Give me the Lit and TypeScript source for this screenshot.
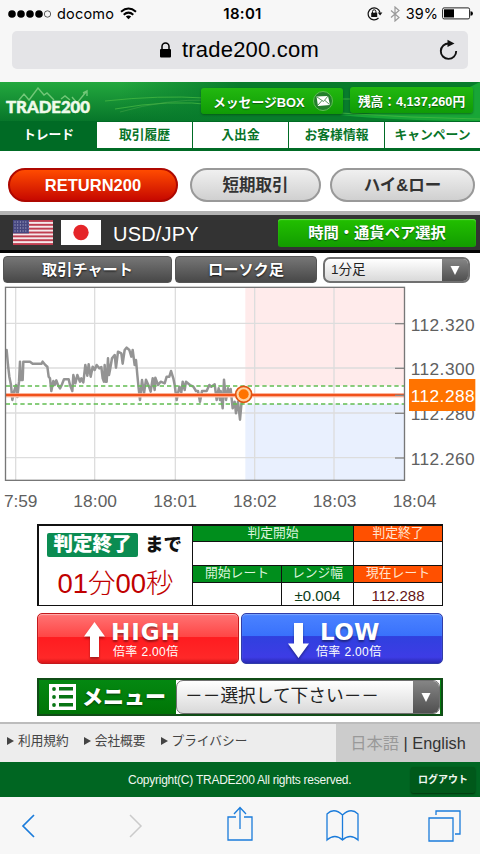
import { LitElement, html, svg, css } from "lit";
import { customElement, property, state } from "lit/decorators.js";
import { classMap } from "lit/directives/class-map.js";

// Chart coordinates are in thirds of a css pixel
const RATE_POINTS =
  "20,195 24,240 28,275 33,300 37,345 42,320 48,300 52,336 57,290 60,230 63,285 68,285 70,230 90,230 98,236 125,236 128,230 136,240 142,245 146,275 150,280 154,318 160,288 164,300 169,286 174,300 180,310 186,298 192,283 206,283 210,300 217,318 220,270 226,295 232,270 240,290 244,280 250,292 256,240 262,272 266,238 272,275 278,245 284,255 290,240 298,250 304,246 308,280 312,290 314,240 317,290 320,290 324,220 327,270 330,255 336,220 344,210 348,248 354,200 364,205 368,236 374,195 380,188 388,195 394,215 398,195 404,240 408,225 412,270 416,310 420,345 426,285 432,325 438,284 446,302 452,320 458,280 464,315 466,278 474,300 482,290 494,295 500,275 508,275 513,258 520,280 524,300 530,345 538,305 544,322 548,290 554,315 558,290 570,300 580,305 588,318 594,318 600,350 606,318 620,318 628,300 634,305 644,298 650,345 656,310 660,345 662,318 668,370 672,284 678,345 684,310 688,325 692,312 698,370 704,350 708,385 714,350 720,404 724,360 730,330";

@customElement("browser-bar")
export class BrowserBar extends LitElement {
  static styles = css`
    :host {
      display: block;
      height: 82px;
      background: #f7f7f7;
      color: #000;
      font-family: Inter, "Liberation Sans", sans-serif;
    }

    .status {
      display: grid;
      grid-template-columns: 1fr auto 1fr;
      align-items: center;
      height: 27px;
      padding: 0 7px 0 8px;
      font-size: 14.5px;
      line-height: 27px;
    }

    .left,
    .right {
      display: flex;
      align-items: center;
    }

    .left {
      gap: 6px;
    }

    .left span {
      letter-spacing: 0.2px;
    }

    .right {
      justify-content: flex-end;
      gap: 4px;
    }

    .time {
      padding-left: 4px;
      font-weight: 600;
      font-size: 15px;
      letter-spacing: 0.3px;
    }

    .address {
      display: flex;
      align-items: center;
      height: 38px;
      margin: 4px 12px 0;
      padding: 0 10px 0 147px;
      border-radius: 5px;
      background: #e4e4e7;
    }

    .host {
      flex: 1;
      margin-left: 10px;
      font-family: "Liberation Sans", sans-serif;
      font-size: 22px;
      letter-spacing: 0.2px;
    }
  `;

  render() {
    return html`
      <div class="status">
        <div class="left">
          <svg width="43" height="10" viewBox="0 0 43 10">
            ${[4, 13, 22, 31].map((x) => svg`<circle cx=${x} cy="5" r="3.8" />`)}
            <circle cx="39.5" cy="5" r="3.2" fill="none" stroke="#333" stroke-width=".8" />
          </svg>
          <span>docomo</span>
          <svg width="17" height="13" viewBox="0 0 17 13" fill="none" stroke="#000" stroke-width="2">
            <path d="M1 4.7Q8.500-1.700 16 4.700M3.700 7.700Q8.500 3.600 13.300 7.700" />
            <path d="M5.800 9.500Q8.500 7.300 11.200 9.500L8.500 12.300z" fill="#000" stroke="none" />
          </svg>
        </div>
        <span class="time">18:01</span>
        <div class="right">
          <svg width="17" height="15" viewBox="0 0 17 15" fill="none" stroke="#111">
            <path d="M11.500 12A6 6 0 1 1 13 6.500" stroke-width="1.200" />
            <path d="M10.800 6.500h4.600l-2.300 3z" fill="#111" stroke="none" />
            <rect x="4.200" y="6.700" width="6" height="4.300" fill="#111" stroke="none" />
            <path d="M5.500 7V5.500a1.700 1.700 0 0 1 3.400 0V7" />
          </svg>
          <svg width="14" height="16" viewBox="0 0 14 16" fill="none" stroke="#999" stroke-width="1.200">
            <path d="M3 4.500l8 7-4 3.500V1l4 3.500-8 7" />
          </svg>
          <span>39%</span>
          <svg width="31" height="13" viewBox="0 0 31 13">
            <rect x=".6" y=".9" width="27" height="11" rx="1.500" fill="#fff" stroke="#222" />
            <rect x="2" y="2.300" width="10" height="8.200" />
            <path d="M28.500 4.300q2.500 0 2.500 2.200t-2.500 2.200z" />
          </svg>
        </div>
      </div>
      <div class="address">
        <svg width="13" height="16" viewBox="0 0 13 16">
          <rect x="1" y="7" width="11" height="8.500" rx="1" />
          <path d="M3 8V4.600a3.500 3.500 0 0 1 7 0V8" fill="none" stroke="#000" stroke-width="1.500" />
        </svg>
        <span class="host">trade200.com</span>
        <svg width="19" height="22" viewBox="0 0 19 22">
          <path d="M10 4.500A7.700 7.700 0 1 0 17.200 12" fill="none" stroke="#111" stroke-width="1.900" />
          <path d="M8.500 .8l7 3.700-7 3.500z" fill="#111" />
        </svg>
      </div>
    `;
  }
}

@customElement("rate-chart")
export class RateChart extends LitElement {
  static styles = css`
    :host {
      display: block;
      height: 230px;
    }

    svg {
      display: block;
    }

    .grid {
      stroke: #ddd;
      stroke-width: 4;
    }

    .tick {
      stroke: #888;
      stroke-width: 4;
    }

    .limit {
      stroke: #62bd52;
      stroke-width: 4.5;
      stroke-dasharray: 13 9;
    }

    .rate {
      fill: none;
      stroke: #949494;
      stroke-width: 7.5;
      stroke-linejoin: round;
      stroke-linecap: round;
    }

    text {
      font-family: "Liberation Sans", sans-serif;
      font-size: 52px;
      fill: #606060;
    }

    .current {
      fill: #fff;
    }
  `;

  @property({ type: String }) current = "112.288";

  render() {
    const rates: [string, number][] = [
      ["112.320", 115],
      ["112.300", 249],
      ["112.280", 384],
      ["112.260", 518],
    ];
    const times = ["18:00", "18:01", "18:02", "18:03", "18:04"];
    return html`
      <svg width="480" height="230" viewBox="0 0 1440 690">
        <rect x="736" y="8" width="477" height="294" fill="#ffebeb" />
        <rect x="736" y="357" width="477" height="228" fill="#e9f0fe" />
        ${[47, 284, 526, 764, 1002].map(
          (x) => svg`<line class="grid" x1=${x} x2=${x} y1="8" y2="585" />`
        )}
        ${rates.map(
          ([label, y]) => svg`
            <line class="grid" x1="16" x2="1213" y1=${y} y2=${y} />
            <line class="tick" x1="1185" x2="1213" y1=${y + 1} y2=${y + 1} />
            <text x="1232" y=${y + 22} textLength="192">${label}</text>
          `
        )}
        <polyline class="rate" points=${RATE_POINTS} />
        <line class="limit" x1="17" x2="1213" y1="303" y2="303" />
        <line class="limit" x1="17" x2="1213" y1="357" y2="357" />
        <line x1="16" x2="1213" y1="331" y2="331" stroke="#ffc9b5" stroke-width="13" />
        <line x1="16" x2="1213" y1="330" y2="330" stroke="#f1511b" stroke-width="7" />
        <line class="tick" x1="1185" x2="1213" y1="331" y2="331" />
        <rect x="16.500" y="7" width="1197" height="579" fill="none" stroke="#777" stroke-width="4" />
        <circle cx="731" cy="328" r="24" fill="#ffd0a0" stroke="#df5510" stroke-width="5" />
        <circle cx="731" cy="328" r="15" fill="#ff7300" />
        <rect x="1227" y="282" width="199" height="96" fill="#ff7300" />
        <text class="current" x="1232" y="350" textLength="192">${this.current}</text>
        <text x="12" y="666" textLength="100">7:59</text>
        ${times.map(
          (t, i) => svg`<text x=${220 + i * 239.5} y="666" textLength="131">${t}</text>`
        )}
      </svg>
    `;
  }
}

@customElement("order-button")
export class OrderButton extends LitElement {
  static styles = css`
    :host {
      display: block;
      flex: 1;
    }

    .button {
      display: flex;
      box-sizing: border-box;
      height: 51px;
      padding: 8px 0 0 46px;
      gap: 8px;
      border: 1px solid #c3191c;
      border-radius: 5px;
      background: linear-gradient(#ff7474, #ff4646 46%, #ff1c20 48%, #ff2828 90%, #d9161a);
      box-shadow: inset 0 1px 1px #ffb0b0;
      color: #fff;
    }

    .low {
      gap: 7px;
      border-color: #303da8;
      background: linear-gradient(#4b83ff, #3971fc 44%, #3040df 46%, #3d3ce5 88%, #2929b4);
      box-shadow: inset 0 1px 1px #79a5ff;
    }

    .arrow {
      filter: drop-shadow(0 2px 1px rgba(0, 0, 0, 0.35));
    }

    .low .arrow {
      transform: rotate(180deg);
      filter: drop-shadow(0 -2px 1px rgba(0, 0, 0, 0.35));
    }

    .labels {
      display: flex;
      flex-direction: column;
    }

    .side {
      height: 23px;
      font: bold 23px/20px "DejaVu Sans", sans-serif;
      letter-spacing: 1px;
      text-shadow: 0 2px 2px rgba(0, 0, 0, 0.4);
    }

    .high .side {
      margin-left: -2px;
    }

    .low .side {
      padding-left: 4px;
      letter-spacing: 0.3px;
    }

    .payout {
      font: 12px/14px "Liberation Sans", "Noto Sans CJK JP", sans-serif;
      letter-spacing: 0.35px;
    }
  `;

  @property({ type: String }) side = "HIGH";

  render() {
    const low = this.side === "LOW";
    return html`
      <div class="button ${classMap({ low, high: !low })}">
        <svg class="arrow" width="21" height="36" viewBox="0 0 21 36">
          <path d="M10.500 0L21 14.500h-6V35H6V14.500H0z" fill="#fff" />
        </svg>
        <div class="labels">
          <span class="side">${this.side}</span>
          <span class="payout">倍率 2.00倍</span>
        </div>
      </div>
    `;
  }
}

@customElement("app-root")
export class AppRoot extends LitElement {
  static styles = css`
    :host {
      display: flex;
      flex-direction: column;
      width: 480px;
      height: 854px;
      overflow: hidden;
      background: #fff;
      color: #333;
      font-family: "Liberation Sans", "Noto Sans CJK JP", sans-serif;
      white-space: nowrap;
    }

    .header {
      display: grid;
      height: 39px;
      background: linear-gradient(#14833a, #0c8c2c 55%, #0a8428);
    }

    .swoosh,
    .header-row {
      grid-area: 1 / 1;
    }

    .header-row {
      display: flex;
      align-items: flex-start;
      padding: 5px 7px 0 5px;
    }

    .logo text {
      font: 900 16.5px Lato, sans-serif;
      fill: #effaea;
      stroke: #effaea;
      stroke-width: 0.5px;
    }

    .message,
    .balance {
      display: flex;
      align-items: center;
      box-sizing: border-box;
      height: 26px;
      margin-top: 1px;
      border-radius: 3px;
      background: linear-gradient(#22b80f, #109b06);
      box-shadow: 0 1px 2px rgba(0, 60, 0, 0.5);
      color: #fff;
      font-size: 12.800px;
      font-weight: bold;
      text-shadow: 0 1px 1px #075c0b;
    }

    .message {
      width: 142px;
      margin-left: 107px;
      padding-left: 12px;
      gap: 9px;
    }

    .balance {
      justify-content: center;
      width: 123px;
      margin-top: 0;
      margin-left: 7px;
      font-size: 12.700px;
    }

    .tabs {
      display: grid;
      grid-template-columns: repeat(5, 1fr);
      gap: 1px;
      height: 26px;
      padding: 1px 0 3px 1px;
      background: #006b25;
    }

    .tab {
      background: #fff;
      color: #087428;
      font-size: 12.800px;
      font-weight: bold;
      line-height: 26px;
      text-align: center;
    }

    .tab.active {
      background: #006b25;
      color: #fff;
    }

    .modes {
      display: flex;
      height: 33px;
      padding: 17px 5px 10px 8px;
    }

    .mode {
      box-sizing: border-box;
      height: 34px;
      border: 2px solid #999;
      border-radius: 17px;
      background: linear-gradient(#f0f0f0, #d0d0d0);
      font-size: 16.500px;
      font-weight: bold;
      line-height: 30px;
      text-align: center;
    }

    .mode.return {
      width: 170px;
      margin-right: 12px;
      border-color: #ae0800;
      background: linear-gradient(#ff4b00, #c70900);
      color: #fff;
    }

    .mode.short {
      width: 131px;
      margin-right: 9px;
    }

    .mode.highlow {
      width: 145px;
    }

    .pair {
      display: flex;
      align-items: center;
      box-sizing: border-box;
      height: 42px;
      padding: 0 4px 0 13px;
      border-top: 4px solid #b3b3b3;
      border-bottom: 3px solid #050505;
      background: #333;
      color: #fff;
    }

    .pair svg {
      margin-right: 8px;
    }

    .pair-name {
      flex: 1;
      margin-left: 4px;
      padding-top: 3px;
      font-size: 20px;
      letter-spacing: 0.2px;
    }

    .pair-button {
      width: 198px;
      height: 28px;
      border-radius: 3px;
      background: linear-gradient(#22c000, #129c00);
      box-shadow: inset 0 1px 1px #63dc49;
      font-size: 15.300px;
      font-weight: bold;
      line-height: 27px;
      text-align: center;
      text-shadow: 0 1px 1px #075c0b;
    }

    .chart-controls {
      display: flex;
      height: 28px;
      padding: 3px 0 1px 3px;
    }

    .chart-tab {
      box-sizing: border-box;
      width: 169px;
      height: 27px;
      margin-right: 3px;
      border: 1px solid #555;
      border-radius: 4px;
      background: linear-gradient(#767676, #484848);
      color: #fff;
      font-size: 15.200px;
      font-weight: bold;
      line-height: 25px;
      text-align: center;
      text-shadow: 0 1px 2px #111;
    }

    .chart-tab.candle {
      width: 142px;
      margin-right: 6px;
    }

    .select {
      display: flex;
      box-sizing: border-box;
      overflow: hidden;
      border: 2px solid #707070;
      border-radius: 7px;
      background: linear-gradient(#fff, #d9d9d9);
      color: #222;
    }

    .select .value {
      flex: 1;
    }

    .select .handle {
      display: flex;
      align-items: center;
      justify-content: center;
      width: 26px;
      background: linear-gradient(#858585, #505050);
    }

    .interval {
      width: 147px;
      height: 26px;
      margin-top: 1px;
      padding-left: 6px;
      font-size: 13.500px;
      line-height: 22px;
    }

    .panel {
      display: grid;
      grid-template-columns: 153px 88px 71px 88px;
      grid-template-rows: 15px 23px 16px 22px;
      gap: 1px;
      width: 403px;
      margin: 9px 0 7px 37px;
      padding: 2px 1px 1px 2px;
      background: #111;
      text-align: center;
      font-size: 12.800px;
    }

    .panel > div {
      background: #fff;
    }

    .panel .countdown {
      grid-row: 1 / 5;
      display: flex;
      flex-direction: column;
    }

    .judge {
      display: flex;
      align-items: center;
      gap: 7px;
      padding: 7px 0 0 8px;
      color: #111;
      font-size: 18.500px;
      font-weight: 900;
      line-height: 24px;
    }

    .badge {
      width: 91px;
      height: 24px;
      border-radius: 2px;
      background: #0b8c52;
      color: #fff;
      font-size: 19.500px;
      line-height: 23px;
    }

    .remaining {
      margin-top: 8px;
      color: #c00000;
      font-size: 27.500px;
      font-weight: 300;
      line-height: 37px;
    }

    .panel .green,
    .panel .orange {
      background: #008e1c;
      color: #dcf5dc;
      line-height: 14px;
    }

    .panel .orange {
      background: #ff5000;
      color: #ffe5cf;
    }

    .panel .span-two {
      grid-column: span 2;
    }

    .panel .range,
    .panel .now {
      color: #0c3c18;
      font-size: 15px;
      line-height: 25px;
    }

    .panel .now {
      color: #651414;
    }

    .orders {
      display: flex;
      gap: 2px;
      width: 406px;
      margin-left: 37px;
    }

    .menu {
      display: flex;
      box-sizing: border-box;
      width: 406px;
      height: 38px;
      margin: 14px 0 6px 37px;
      border: 2px solid #104c17;
      background: linear-gradient(#048811, #007506);
    }

    .menu-title {
      display: flex;
      align-items: center;
      width: 137px;
      gap: 6px;
      padding-left: 10px;
      box-sizing: border-box;
      color: #fff;
      font-size: 21px;
      font-weight: 900;
      line-height: 32px;
      text-shadow: 0 1px 2px #033c08;
    }

    .menu-field {
      flex: 1;
      margin-right: 1px;
      background: #fff;
    }

    .menu-select {
      height: 34px;
      padding-left: 8px;
      border-width: 1px;
      font-size: 17.700px;
      line-height: 31px;
    }

    .links {
      display: flex;
      box-sizing: border-box;
      height: 40px;
      border-top: 2px solid #bcbcbc;
      background: #ededed;
      color: #444;
      font-size: 12.700px;
      line-height: 32px;
    }

    .link-list {
      display: flex;
      flex: 1;
      height: 33px;
      gap: 15px;
      padding-left: 7px;
    }

    .link-list span {
      display: flex;
      align-items: center;
      gap: 4px;
    }

    .languages {
      box-sizing: border-box;
      width: 144px;
      background: #ccc;
      color: #333;
      font-size: 16.300px;
      line-height: 39px;
      text-align: center;
    }

    .muted {
      color: #999;
    }

    .copyright {
      display: flex;
      align-items: center;
      box-sizing: border-box;
      height: 35px;
      padding: 0 5px 0 128px;
      background: #006622;
      color: #f0f7f0;
      font-size: 12px;
    }

    .copyright-text {
      flex: 1;
      letter-spacing: -0.250px;
    }

    .logout {
      width: 64px;
      height: 26px;
      border-radius: 2px;
      background: #00591a;
      box-shadow: 0 1px 2px #00330c;
      font-size: 10px;
      font-weight: bold;
      line-height: 26px;
      text-align: center;
    }

    .toolbar {
      display: flex;
      flex: 1;
      align-items: center;
      padding-left: 21px;
      background: #f7f7f7;
    }

    .toolbar .back {
      margin-right: 94px;
    }

    .toolbar .forward {
      margin-right: 84px;
    }

    .toolbar .share {
      margin: 0 73px 4px 0;
    }

    .toolbar .book {
      margin-right: 69px;
    }
  `;

  @state() private activeTab = 0;

  private tabs = ["トレード", "取引履歴", "入出金", "お客様情報", "キャンペーン"];

  private renderHandle() {
    return html`
      <span class="handle">
        <svg width="10" height="9" viewBox="0 0 10 9">
          <path d="M.5 0h9L5 9z" fill="#fff" />
        </svg>
      </span>
    `;
  }

  private renderHeader() {
    return html`
      <div class="header">
        <svg class="swoosh" width="480" height="39" viewBox="0 0 480 39">
          <defs>
            <linearGradient id="glow" x2="0" y2="1">
              <stop stop-color="#23a83e" />
              <stop offset="1" stop-color="#07762a" />
            </linearGradient>
            <linearGradient id="fade">
              <stop offset=".5" stop-color="#087c2c" stop-opacity="0" />
              <stop offset="1" stop-color="#087c2c" />
            </linearGradient>
          </defs>
          <rect width="240" height="39" fill="url(#glow)" />
          <rect width="240" height="39" fill="url(#fade)" />
          <rect x="240" width="240" height="39" fill="#087c2c" />
          <path d="M340 33Q420 32 480 0v39Q400 39 340 33z" fill="#18a637" />
          <path d="M105 19q55-6 100-3M115 27q55-10 100-4M342 17h10M340 31q70 5 140 6" fill="none" stroke="#48b943" opacity=".75" />
          <path d="M120 30q45-13 90-12" fill="none" stroke="#49a749" opacity=".5" />
        </svg>
        <div class="header-row">
          <svg class="logo" width="89" height="30" viewBox="0 0 89 30">
            <path d="M14 13l5-6 5 6L33 1l6 7 3-2 7 7M56 12l4-3 5 4M67 10l5 6L81 5M78 6l4-2v5" fill="none" stroke="#71c777" stroke-width="1.400" />
            <text x="1" y="26" textLength="84" lengthAdjust="spacingAndGlyphs">TRADE200</text>
          </svg>
          <div class="message">
            メッセージBOX
            <svg width="20" height="20" viewBox="0 0 20 20">
              <circle cx="10" cy="10" r="9.500" fill="#247f2c" stroke="#60bd55" />
              <path d="M3.500 5.500l11.500-.5 2 9-12 1z" fill="#fff" />
              <path d="M4 6l6.500 4.500L15 5M5 14l4-4.500M16.500 13.500L12 9.500" fill="none" stroke="#46874b" stroke-width=".9" />
            </svg>
          </div>
          <div class="balance">残高：4,137,260円</div>
        </div>
      </div>
    `;
  }

  private renderPair() {
    return html`
      <div class="pair">
        <svg width="40" height="25" viewBox="0 0 40 25">
          <rect width="40" height="25" fill="#f4e9eb" />
          ${[0, 1, 2, 3, 4, 5, 6].map(
            (i) => svg`<rect y=${i * 3.85} width="40" height="1.920" fill="#bf3e50" />`
          )}
          <rect width="16" height="13.400" fill="#46477f" />
          ${[2, 5, 8, 11].map(
            (y) => svg`<path d="M1.500 ${y}h14" stroke="#bfc0d9" stroke-dasharray="1 1.700" />`
          )}
        </svg>
        <svg width="40" height="25" viewBox="0 0 40 25">
          <rect width="40" height="25" fill="#fff" />
          <circle cx="20" cy="12.500" r="7.700" fill="#e52529" />
        </svg>
        <span class="pair-name">USD/JPY</span>
        <div class="pair-button">時間・通貨ペア選択</div>
      </div>
    `;
  }

  private renderPanel() {
    return html`
      <div class="panel">
        <div class="countdown">
          <div class="judge"><span class="badge">判定終了</span>まで</div>
          <div class="remaining">01分00秒</div>
        </div>
        <div class="green span-two">判定開始</div>
        <div class="orange">判定終了</div>
        <div class="span-two"></div>
        <div></div>
        <div class="green">開始レート</div>
        <div class="green">レンジ幅</div>
        <div class="orange">現在レート</div>
        <div></div>
        <div class="range">±0.004</div>
        <div class="now">112.288</div>
      </div>
    `;
  }

  private renderMenu() {
    return html`
      <div class="menu">
        <div class="menu-title">
          <svg width="27" height="26" viewBox="0 0 27 26">
            <rect width="27" height="26" fill="#fff" />
            ${[4.5, 12.5, 20.5].map(
              (y) => svg`
                <circle cx="5" cy=${y + 0.5} r="1.900" fill="#087514" />
                <rect x="10" y=${y - 1.5} width="14" height="3.500" fill="#087514" />
              `
            )}
          </svg>
          メニュー
        </div>
        <div class="menu-field">
          <div class="select menu-select">
            <span class="value">－－選択して下さい－－</span>
            ${this.renderHandle()}
          </div>
        </div>
      </div>
    `;
  }

  private renderToolbar() {
    return html`
      <div class="toolbar">
        <svg class="back" width="14" height="24" viewBox="0 0 14 24" fill="none" stroke="#1b7cdb" stroke-width="1.700">
          <path d="M13 1L2 12l11 11" />
        </svg>
        <svg class="forward" width="14" height="24" viewBox="0 0 14 24" fill="none" stroke="#cbcbcb" stroke-width="1.500">
          <path d="M1 1l11 11L1 23" />
        </svg>
        <svg class="share" width="26" height="36" viewBox="0 0 26 36" fill="none" stroke="#1b7cdb" stroke-width="1.300">
          <path d="M9 11H1v23h24V11h-8M13 23V2M7 8l6-6.500L19 8" />
        </svg>
        <svg class="book" width="33" height="32" viewBox="0 0 33 32" fill="none" stroke="#1b7cdb" stroke-width="1.300">
          <path d="M16.500 5Q8-3 1 4v26q8-7 15.500 0Q24 23 32 30V4q-7-7-15.500 1v25" />
        </svg>
        <svg width="33" height="32" viewBox="0 0 33 32" fill="none" stroke="#1b7cdb" stroke-width="1.300">
          <path d="M1 8h24v23H1zM8 5V1h24v23h-5" />
        </svg>
      </div>
    `;
  }

  render() {
    return html`
      <browser-bar></browser-bar>
      ${this.renderHeader()}
      <div class="tabs">
        ${this.tabs.map(
          (tab, index) => html`
            <div
              class="tab ${classMap({ active: index === this.activeTab })}"
              @click=${() => (this.activeTab = index)}
            >
              ${tab}
            </div>
          `
        )}
      </div>
      <div class="modes">
        <div class="mode return">RETURN200</div>
        <div class="mode short">短期取引</div>
        <div class="mode highlow">ハイ&amp;ロー</div>
      </div>
      ${this.renderPair()}
      <div class="chart-controls">
        <div class="chart-tab">取引チャート</div>
        <div class="chart-tab candle">ローソク足</div>
        <div class="select interval">
          <span class="value">1分足</span>
          ${this.renderHandle()}
        </div>
      </div>
      <rate-chart></rate-chart>
      ${this.renderPanel()}
      <div class="orders">
        <order-button side="HIGH"></order-button>
        <order-button side="LOW"></order-button>
      </div>
      ${this.renderMenu()}
      <div class="links">
        <div class="link-list">
          ${["利用規約", "会社概要", "プライバシー"].map(
            (link) => html`
              <span>
                <svg width="7" height="8" viewBox="0 0 7 8"><path d="M0 0l7 4-7 4z" fill="#444" /></svg>
                ${link}
              </span>
            `
          )}
        </div>
        <div class="languages"><span class="muted">日本語</span> | English</div>
      </div>
      <div class="copyright">
        <span class="copyright-text">Copyright(C) TRADE200 All rights reserved.</span>
        <div class="logout">ログアウト</div>
      </div>
      ${this.renderToolbar()}
    `;
  }
}
